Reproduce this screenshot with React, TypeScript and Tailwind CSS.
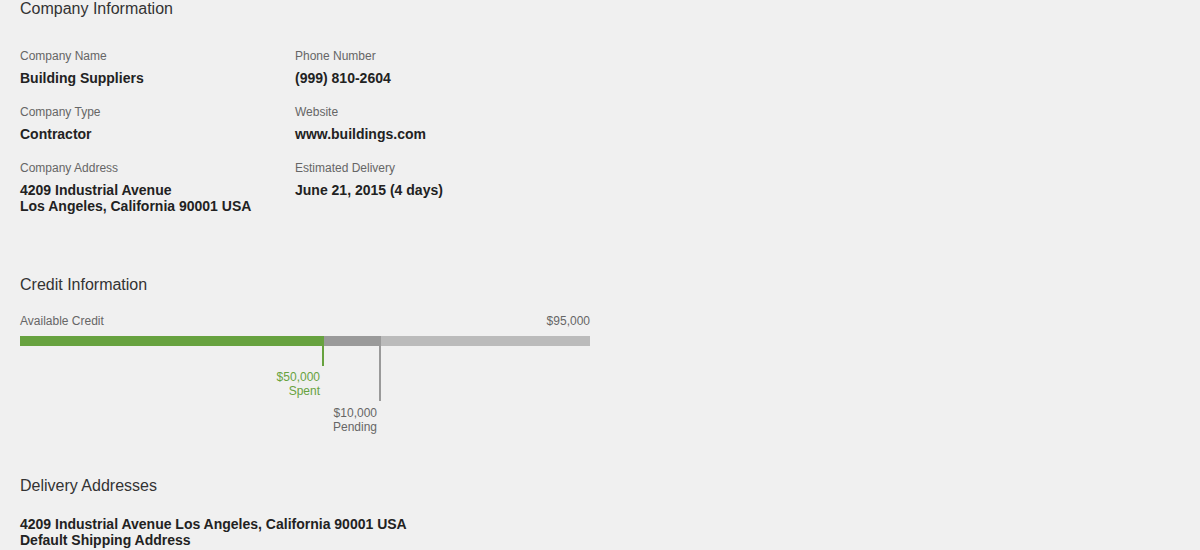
const font = "font-['Liberation_Sans',Arial,Helvetica,sans-serif]";

const fields = [
  { label: "Company Name", value: ["Building Suppliers"] },
  { label: "Phone Number", value: ["(999) 810-2604"] },
  { label: "Company Type", value: ["Contractor"] },
  { label: "Website", value: ["www.buildings.com"] },
  { label: "Company Address", value: ["4209 Industrial Avenue", "Los Angeles, California 90001 USA"] },
  { label: "Estimated Delivery", value: ["June 21, 2015 (4 days)"] },
];

function SectionTitle({ children }: { children: string }) {
  return <h2 className="text-[16px] leading-[18px] text-[#333]">{children}</h2>;
}

function Field({ label, value }: { label: string; value: string[] }) {
  return (
    <div>
      <p className="text-[12px] leading-[14px] text-[#666]">{label}</p>
      <div className="mt-[7px] text-[14px] font-bold leading-[16px] text-[#222]">
        {value.map((line) => (
          <p key={line}>{line}</p>
        ))}
      </div>
    </div>
  );
}

export default function App() {
  return (
    <div className={`${font} min-h-screen bg-[#f0f0f0] px-5`}>
      <section>
        <SectionTitle>Company Information</SectionTitle>
        <div className="mt-[30.5px] grid grid-cols-[275px_auto] gap-y-[19px]">
          {fields.map((f) => (
            <Field key={f.label} label={f.label} value={f.value} />
          ))}
        </div>
      </section>

      <section className="mt-[62px]">
        <SectionTitle>Credit Information</SectionTitle>
        <div className="mt-[20.5px] flex w-[570px] justify-between text-[12px] leading-[14px] text-[#666]">
          <span>Available Credit</span>
          <span>$95,000</span>
        </div>
        <div className="mt-2 flex h-[10px] w-[570px] bg-[#bbbbbb]">
          <div className="w-[304px] bg-[#67a23f]" />
          <div className="w-[57px] bg-[#9a9a9a]" />
        </div>
        <div className="flex text-[12px] leading-[14px]">
          <div className="flex w-[304px] flex-col items-end">
            <div className="h-[20px] w-[2px] bg-[#67a23f]" />
            <div className="mt-1 pr-1 text-right text-[#67a23f]">
              <p>$50,000</p>
              <p>Spent</p>
            </div>
          </div>
          <div className="flex w-[57px] flex-col items-end">
            <div className="h-[55px] w-[2px] bg-[#9a9a9a]" />
            <div className="mt-[5px] pr-1 text-right text-[#666]">
              <p>$10,000</p>
              <p>Pending</p>
            </div>
          </div>
        </div>
      </section>

      <section className="mt-[43px]">
        <SectionTitle>Delivery Addresses</SectionTitle>
        <div className="mt-[21px] text-[14px] font-bold leading-[16px] text-[#222]">
          <p>4209 Industrial Avenue Los Angeles, California 90001 USA</p>
          <p>Default Shipping Address</p>
        </div>
      </section>
    </div>
  );
}
